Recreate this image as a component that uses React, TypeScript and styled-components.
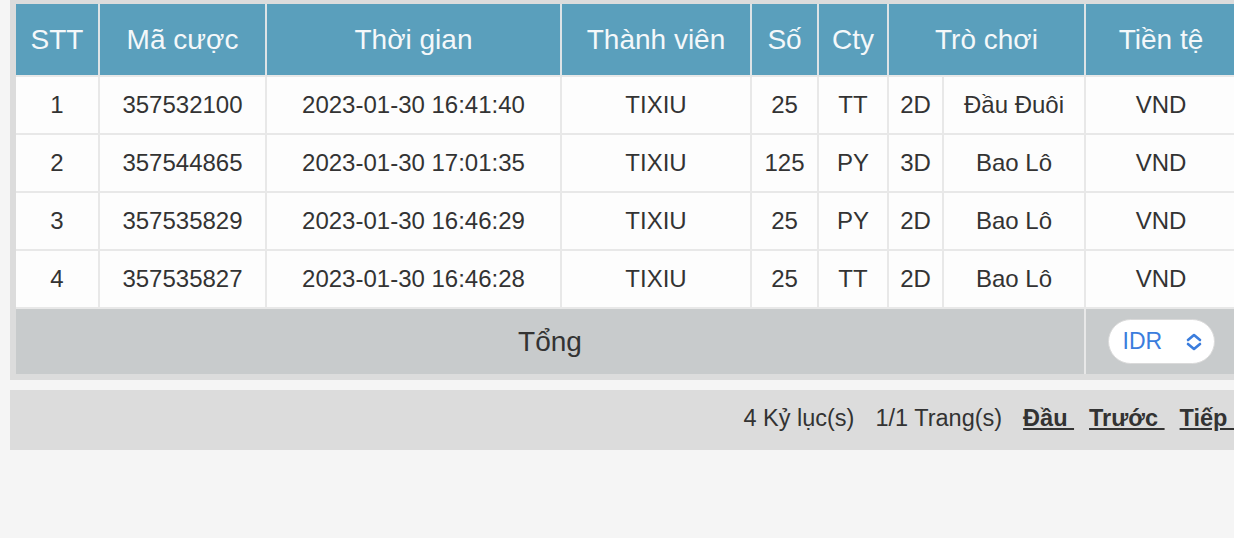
import React from 'react';
import styled, { createGlobalStyle } from 'styled-components';

interface Bet {
  stt: number;
  code: string;
  time: string;
  member: string;
  amount: number;
  company: string;
  kind: string;
  game: string;
  currency: string;
}

const bets: Bet[] = [
  { stt: 1, code: '357532100', time: '2023-01-30 16:41:40', member: 'TIXIU', amount: 25, company: 'TT', kind: '2D', game: 'Đầu Đuôi', currency: 'VND' },
  { stt: 2, code: '357544865', time: '2023-01-30 17:01:35', member: 'TIXIU', amount: 125, company: 'PY', kind: '3D', game: 'Bao Lô', currency: 'VND' },
  { stt: 3, code: '357535829', time: '2023-01-30 16:46:29', member: 'TIXIU', amount: 25, company: 'PY', kind: '2D', game: 'Bao Lô', currency: 'VND' },
  { stt: 4, code: '357535827', time: '2023-01-30 16:46:28', member: 'TIXIU', amount: 25, company: 'TT', kind: '2D', game: 'Bao Lô', currency: 'VND' },
];

// column widths, border included
const columns = [84, 167, 295, 190, 67, 70, 55, 142, 150];

export default function App() {
  return (
    <>
      <GlobalStyle />
      <Page>
        <TableBox>
          <Table>
            <colgroup>
              {columns.map((w, i) => (
                <col key={i} style={{ width: w }} />
              ))}
            </colgroup>
            <thead>
              <tr>
                <Th>STT</Th>
                <Th>Mã cược</Th>
                <Th>Thời gian</Th>
                <Th>Thành viên</Th>
                <Th>Số</Th>
                <Th>Cty</Th>
                <Th colSpan={2}>Trò chơi</Th>
                <Th>Tiền tệ</Th>
              </tr>
            </thead>
            <tbody>
              {bets.map((bet) => (
                <tr key={bet.code}>
                  <Td>{bet.stt}</Td>
                  <Td>{bet.code}</Td>
                  <Td>{bet.time}</Td>
                  <Td>{bet.member}</Td>
                  <Td>{bet.amount}</Td>
                  <Td>{bet.company}</Td>
                  <Td>{bet.kind}</Td>
                  <Td>{bet.game}</Td>
                  <Td>{bet.currency}</Td>
                </tr>
              ))}
            </tbody>
            <tfoot>
              <tr>
                <TotalCell colSpan={8}>Tổng</TotalCell>
                <TotalCell>
                  <CurrencyPicker />
                </TotalCell>
              </tr>
            </tfoot>
          </Table>
        </TableBox>

        <Pager>
          <PagerText>4 Kỷ lục(s)</PagerText>
          <PagerText>1/1 Trang(s)</PagerText>
          <PagerLinks>
            <PagerLink href="#">Đầu&nbsp;</PagerLink>
            <PagerLink href="#">Trước&nbsp;</PagerLink>
            <PagerLink href="#">Tiếp&nbsp;</PagerLink>
          </PagerLinks>
        </Pager>
      </Page>
    </>
  );
}

const GlobalStyle = createGlobalStyle`
  html, body {
    margin: 0;
    background: #f5f5f5;
    overflow: hidden;
  }
  body {
    font-family: "Liberation Sans", Arial, sans-serif;
    color: #333;
  }
`;

const Page = styled.div`
  width: 1400px;
  padding-left: 10px;
  display: flex;
  flex-direction: column;
  gap: 10px;
`;

const TableBox = styled.div`
  width: 1232px;
  box-sizing: border-box;
  background: #dcdcdc;
  padding: 4px 6px 6px;
`;

const Table = styled.table`
  width: 1220px;
  table-layout: fixed;
  border-collapse: separate;
  border-spacing: 0;
`;

const Th = styled.th`
  height: 73px;
  box-sizing: border-box;
  padding: 0;
  background: #5a9fbc;
  color: #f4f8fa;
  font-size: 28px;
  font-weight: normal;
  text-align: center;
  border-right: 2px solid #dde3e6;
  border-bottom: 2px solid #e8e8e8;
  &:last-child {
    border-right: none;
  }
`;

const Td = styled.td`
  height: 58px;
  box-sizing: border-box;
  padding: 0;
  background: #fdfdfd;
  font-size: 24px;
  text-align: center;
  border-right: 2px solid #e8e8e8;
  border-bottom: 2px solid #e8e8e8;
  &:last-child {
    border-right: none;
  }
`;

const TotalCell = styled.td`
  height: 65px;
  padding: 0;
  background: #c8cbcc;
  font-size: 28px;
  text-align: center;
  border-right: 2px solid #e8e8e8;
  &:last-child {
    border-right: none;
  }
`;

function CurrencyPicker() {
  return (
    <Picker>
      <span>IDR</span>
      <Chevrons viewBox="0 0 16 18" fill="none">
        <path
          d="M2 7L8 2L14 7M2 11L8 16L14 11"
          stroke="#3b7ddd"
          strokeWidth="2.6"
          strokeLinecap="round"
          strokeLinejoin="round"
        />
      </Chevrons>
    </Picker>
  );
}

const Picker = styled.div`
  display: inline-flex;
  align-items: center;
  justify-content: space-between;
  vertical-align: middle;
  box-sizing: border-box;
  width: 107px;
  height: 45px;
  padding: 0 12px 0 14px;
  border-radius: 23px;
  background: #fff;
  border: 1px solid #dadada;
  color: #3b7ddd;
  font-size: 23px;
  cursor: pointer;
`;

const Chevrons = styled.svg`
  width: 16px;
  height: 18px;
  flex-shrink: 0;
`;

const Pager = styled.div`
  width: 1232px;
  height: 60px;
  box-sizing: border-box;
  background: #dcdcdc;
  display: flex;
  align-items: center;
  justify-content: flex-end;
  gap: 21px;
  padding-right: 8px;
  padding-bottom: 3px;
  font-size: 23.5px;
`;

const PagerText = styled.span`
  color: #333;
`;

const PagerLinks = styled.div`
  display: flex;
  gap: 15px;
`;

const PagerLink = styled.a`
  color: #333;
  font-weight: bold;
  text-decoration: underline;
`;
